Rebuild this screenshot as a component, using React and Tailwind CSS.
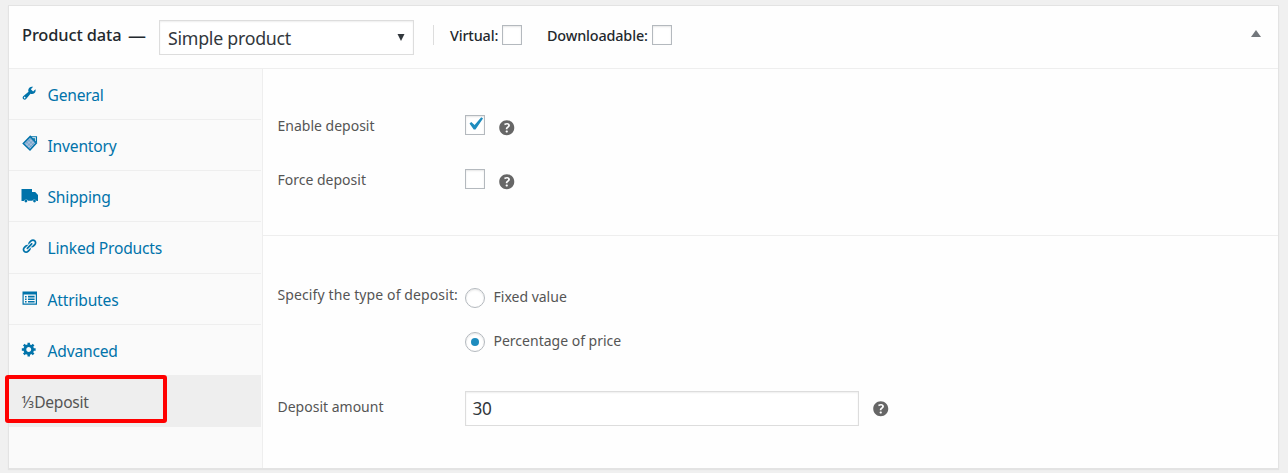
import React from "react";

const LINK = "M17.74 2.76c1.68 1.69 1.68 4.41 0 6.1l-1.53 1.52c-1.12 1.12-2.7 1.47-4.14 1.09l2.62-2.61.76-.77.76-.76c.84-.84.84-2.2 0-3.04-.84-.85-2.2-.85-3.04 0l-.77.76-3.38 3.38c-.37-1.44-.02-3.02 1.1-4.14l1.52-1.53c1.69-1.68 4.42-1.68 6.1 0zM8.59 13.43l5.34-5.34c.42-.42.42-1.1 0-1.52-.44-.43-1.13-.39-1.53 0l-5.33 5.34c-.42.42-.42 1.1 0 1.52.44.43 1.13.39 1.52 0zm-.76 2.29l4.14-4.15c.38 1.44.03 3.02-1.09 4.14l-1.52 1.53c-1.69 1.68-4.41 1.68-6.1 0-1.68-1.68-1.68-4.42 0-6.1l1.53-1.52c1.12-1.12 2.7-1.47 4.14-1.1l-4.14 4.15c-.85.84-.85 2.2 0 3.05.84.84 2.2.84 3.04 0z";
const WRENCH = "M16.68 9.77c-1.34 1.34-3.3 1.67-4.95.99l-5.41 6.52c-.99.99-2.59.99-3.58 0s-.99-2.59 0-3.57l6.52-5.42c-.68-1.65-.35-3.61.99-4.95 1.28-1.28 3.12-1.62 4.72-1.06l-2.89 2.89 2.82 2.82 2.86-2.87c.53 1.58.18 3.39-1.08 4.65zM3.81 16.21c.4.39 1.04.39 1.43 0 .4-.4.4-1.04 0-1.43-.39-.4-1.03-.4-1.43 0-.39.39-.39 1.03 0 1.43z";
const GEAR = "M18 12h-2.18c-.17.7-.44 1.35-.81 1.93l1.54 1.54-2.1 2.1-1.54-1.54c-.58.36-1.23.63-1.91.79V19H8v-2.18c-.68-.16-1.33-.43-1.91-.79l-1.54 1.54-2.12-2.12 1.54-1.54c-.36-.58-.63-1.23-.79-1.91H1V9.03h2.17c.16-.7.44-1.35.8-1.94L2.43 5.55l2.1-2.1 1.54 1.54c.58-.37 1.24-.64 1.93-.81V2h3v2.18c.68.16 1.33.43 1.91.79l1.54-1.54 2.12 2.12-1.54 1.54c.36.59.64 1.24.8 1.94H18V12zm-8.5 1.5c1.66 0 3-1.34 3-3s-1.34-3-3-3-3 1.34-3 3 1.34 3 3 3z";
const HELP = "M17 10c0-3.87-3.14-7-7-7-3.87 0-7 3.13-7 7s3.13 7 7 7c3.86 0 7-3.13 7-7zm-6.3 1.48H9.14v-.43c0-.38.08-.7.24-.98s.46-.57.88-.89c.41-.29.68-.53.81-.71.14-.18.2-.39.2-.62 0-.25-.09-.44-.28-.58-.19-.13-.45-.19-.79-.19-.58 0-1.25.19-2 .57l-.64-1.28c.87-.49 1.8-.74 2.77-.74.81 0 1.45.2 1.92.58.48.39.71.91.71 1.55 0 .43-.09.8-.29 1.11-.19.32-.57.67-1.11 1.06-.38.28-.61.49-.71.63-.1.15-.15.34-.15.57v.35zm-1.47 2.74c-.18-.17-.27-.42-.27-.73 0-.33.08-.58.26-.75s.43-.25.77-.25c.32 0 .57.09.75.26s.27.42.27.74c0 .3-.09.55-.27.72-.18.18-.43.27-.75.27-.33 0-.58-.09-.76-.26z";

function Glyph({ d }) {
  return (
    <svg className="mt-4 -ml-[0.7px] size-[16.25px]" viewBox="0 0 20 20" fill="currentColor">
      <path fillRule="evenodd" d={d} />
    </svg>
  );
}

function TagIcon() {
  return (
    <svg className="mt-[15px] h-[17px] w-[18px]" viewBox="0 0 18 17" fill="none" stroke="currentColor">
      <path d="M8.3 1.4 14.4 8 8 15 1.3 8.6z" fill="#a9bfdc" strokeWidth="1.5" />
      <path d="M4 6.5l6 6M6 4.5l6 6M8 3l5.5 5.5M3 9.5l6-6M5 11.5l6-6M7 13l6-6" strokeWidth=".6" opacity=".5" />
      <path d="M9 1.8h5.5v5.4M10.5 3.8h2.2v2" strokeWidth="1.1" />
    </svg>
  );
}

function TruckIcon() {
  return (
    <svg className="mt-[18px] -ml-px h-[14px] w-[18px]" viewBox="0 0 18 14">
      <path fill="currentColor" d="M.5 0H11v3h3.2L17 6v6h-1.4a2.3 2.3 0 0 0-4.2-.3H7a2.3 2.3 0 0 0-4.2.3H.5z" />
      <circle cx="4.9" cy="12" r="1.4" fill="currentColor" />
      <circle cx="13.5" cy="12" r="1.4" fill="currentColor" />
    </svg>
  );
}

function FormIcon() {
  return (
    <svg className="mt-[17px] h-[15px] w-4" viewBox="0 0 16 15" fill="currentColor">
      <path fillRule="evenodd" d="M.5 .5H15v13.2H.5zM1.7 3.6v8.9h12.1V3.6z" />
      <path d="M6 4.7h6.6v1.9H6zM6 7.4h6.6v1.7H6zM6 10h6.6v1.6H6zM3 4.9h1.6v1.5H3zM3 7.5h1.6V9H3zM3 10h1.6v1.5H3z" />
    </svg>
  );
}

function Tab({ icon, className, children }) {
  return (
    <a className={"flex border-b border-[#eeeeee] pl-[12.5px] text-[#0073aa] " + className}>
      <span className="w-[26px] shrink-0">{icon}</span>
      <span className="pt-[13px] text-[15.6px] leading-[26px] tracking-[-0.19px]">{children}</span>
    </a>
  );
}

function Check({ checked }) {
  return (
    <span className="flex size-5 shrink-0 border border-[#b4b9be] bg-white shadow-[inset_0_1px_2px_rgba(0,0,0,0.1)]">
      {checked && (
        <svg className="-mt-[5px] -ml-[4px] size-[26px] shrink-0" viewBox="0 0 20 20" fill="#1e8cbe">
          <path d="M14.83 4.89l1.34.94-5.81 8.38H9.02L5.78 9.67l1.34-1.25 2.57 2.4z" />
        </svg>
      )}
    </span>
  );
}

function Radio({ checked }) {
  return (
    <span className="flex size-5 shrink-0 items-center justify-center rounded-full border border-[#b4b9be] bg-white shadow-[inset_0_1px_2px_rgba(0,0,0,0.1)]">
      {checked && <span className="size-2 rounded-full bg-[#1e8cbe]" />}
    </span>
  );
}

function Help({ className }) {
  return (
    <svg className={"size-[21.5px] shrink-0 " + className} viewBox="0 0 20 20" fill="#666">
      <path d={HELP} />
    </svg>
  );
}

function Label({ className, children }) {
  return <span className={"w-[187px] shrink-0 whitespace-nowrap leading-5 " + className}>{children}</span>;
}

export default function App() {
  return (
    <div className="h-[473px] w-[1288px] bg-[#f0f0f0] pt-[5px] pl-2 font-['Noto_Sans','Open_Sans',sans-serif] text-[14px] text-[#555]">
      <section className="relative flex h-[464px] w-[1271px] flex-col border border-[#e3e3e3] bg-[#fefefe] shadow-[0_1px_1px_rgba(0,0,0,0.05)]">
        <header className="flex h-[63px] shrink-0 items-start border-b border-[#eeeeee] text-[#23282d]">
          <h2 className="mt-[16px] ml-[13px] flex w-[137px] items-center justify-between pr-[13px] text-[16.4px] leading-[26px] font-medium tracking-[-0.12px] whitespace-nowrap">
            <span>Product data</span>
            <span className="text-[18px] tracking-normal">—</span>
          </h2>
          <div className="mt-[14px] flex h-[35px] w-[255px] items-center justify-between border border-[#dddddd] bg-white pr-[8px] pl-2 text-[#32373c] shadow-[inset_0_1px_2px_rgba(0,0,0,0.07)]">
            <span className="pt-px text-[17.8px] leading-6 tracking-[-0.27px] whitespace-nowrap">Simple product</span>
            <svg className="-mt-px h-[7px] w-[8px]" viewBox="0 0 8 7"><path d="M.5 0h7L4 7z" fill="#32373c" /></svg>
          </div>
          <span className="mt-[19px] ml-[19px] h-5 w-px bg-[#dddddd]" />
          <span className="mt-[20px] ml-[16px] w-[52px] text-[14.4px] leading-5 font-medium tracking-[-0.15px] whitespace-nowrap">Virtual:</span>
          <span className="mt-[19px]"><Check /></span>
          <span className="mt-[20px] ml-[25px] w-[105px] text-[14.4px] leading-5 font-medium tracking-[-0.15px] whitespace-nowrap">Downloadable:</span>
          <span className="mt-[19px]"><Check /></span>
          <svg className="mt-6 mr-[17px] ml-auto h-[7px] w-[10px]" viewBox="0 0 10 7"><path d="M5 0l5 7H0z" fill="#72777c" /></svg>
        </header>
        <div className="flex grow">
          <nav className="w-[254px] shrink-0 border-r border-[#eeeeee] bg-[#fafafa] pr-px">
            <Tab className="h-[51px]" icon={<Glyph d={WRENCH} />}>General</Tab>
            <Tab className="h-[51px]" icon={<TagIcon />}>Inventory</Tab>
            <Tab className="h-[51px]" icon={<TruckIcon />}>Shipping</Tab>
            <Tab className="h-[52px]" icon={<Glyph d={LINK} />}>Linked Products</Tab>
            <Tab className="h-[51px]" icon={<FormIcon />}>Attributes</Tab>
            <Tab className="h-[50px] border-b-0" icon={<Glyph d={GEAR} />}>Advanced</Tab>
            <a className="flex h-[52px] bg-[#eeeeee] pt-[14px] pl-[12.5px] text-[15.6px] leading-[26px] tracking-[-0.27px] text-[#555]">⅓Deposit</a>
          </nav>
          <div className="flex grow flex-col">
            <div className="h-[167px] shrink-0 border-b border-[#eeeeee] pt-[46px] pl-[14.5px]">
              <div className="flex h-[54px]">
                <Label className="mt-px">Enable deposit</Label>
                <Check checked />
                <Help className="mt-[2px] ml-[11px]" />
              </div>
              <div className="flex">
                <Label className="mt-px">Force deposit</Label>
                <Check />
                <Help className="mt-[2px] ml-[11px]" />
              </div>
            </div>
            <div className="flex h-[155px] pt-[52px] pl-[14.5px]">
              <Label className="-mt-[3px] tracking-[0.11px]">Specify the type of deposit:</Label>
              <div className="flex flex-col gap-6">
                <div className="flex gap-[9px] leading-5"><Radio /><span className="-mt-px">Fixed value</span></div>
                <div className="flex gap-[9px] leading-5"><Radio checked /><span className="-mt-px">Percentage of price</span></div>
              </div>
            </div>
            <div className="flex pl-[14.5px]">
              <Label className="mt-[6px]">Deposit amount</Label>
              <div className="flex h-[35px] w-[394px] items-center border border-[#dddddd] bg-white pt-px pl-[7px] text-[17.2px] tracking-[-0.3px] text-[#32373c] shadow-[inset_0_1px_2px_rgba(0,0,0,0.07)]">30</div>
              <Help className="mt-[7px] ml-[11px]" />
            </div>
          </div>
        </div>
        <div className="absolute top-[369px] -left-1 h-[48px] w-[162px] rounded-[3px] border-4 border-[#ff0000]" />
      </section>
    </div>
  );
}
